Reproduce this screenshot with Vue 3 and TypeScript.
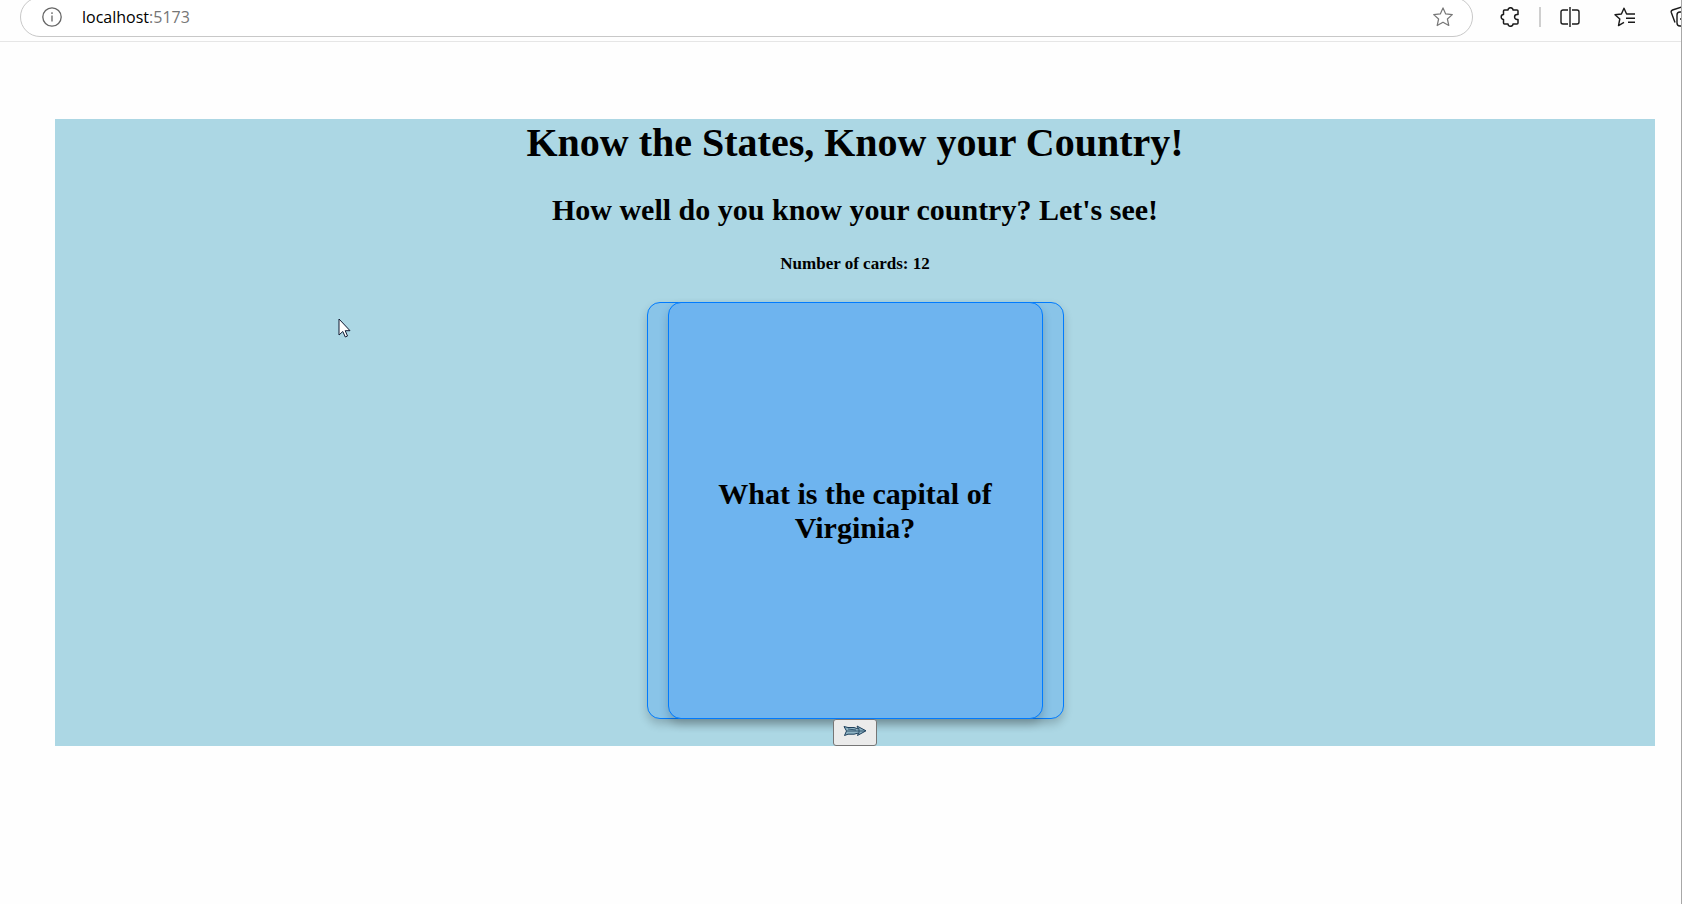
<script setup lang="ts">
import { ref } from 'vue'

interface Card {
  question: string
  answer: string
}

const cards: Card[] = [
  { question: 'What is the capital of Virginia?', answer: 'Richmond' },
]
const cardCount = 12
const current = ref(0)
const flipped = ref(false)

function nextCard(): void {
  flipped.value = false
  current.value = (current.value + 1) % cards.length
}
</script>

<template>
  <div class="window">
    <header class="toolbar">
      <div class="address">
        <button class="tool" type="button" aria-label="Site information">
          <svg width="20" height="20" viewBox="0 0 20 20" fill="none" stroke="#666" stroke-width="1.3">
            <circle cx="10" cy="10" r="9.2" />
            <path d="M10 8.5v6M10 5.2v1.7" />
          </svg>
        </button>
        <span class="url">localhost<span class="port">:5173</span></span>
        <button class="tool" type="button" aria-label="Add to favorites">
          <svg width="20" height="20" viewBox="0 0 20 20" fill="none" stroke="#777" stroke-width="1.2" stroke-linejoin="round">
            <path d="M10 .9l2.700 6 6.600.7-4.900 4.400 1.400 6.500-5.800-3.300-5.800 3.300L5.600 12 .7 7.600l6.600-.7z" />
          </svg>
        </button>
      </div>
      <button class="tool puzzle" type="button" aria-label="Extensions">
        <svg width="20" height="20" viewBox="0 0 20 20" fill="none" stroke="#1a1a1a" stroke-width="1.5" stroke-linejoin="round">
          <path d="M4.500 3H8a2.500 2.300 0 0 1 5 0H17a1 1 0 0 1 1 1V7.600h-1a2.400 2.400 0 0 0 0 4.800h1V16a1 1 0 0 1-1 1H13a2.500 2.300 0 0 1-5 0H4.500a1 1 0 0 1-1-1V12.400a2.300 2.400 0 0 1 0-4.800V4a1 1 0 0 1 1-1z" />
        </svg>
      </button>
      <span class="rule"></span>
      <button class="tool" type="button" aria-label="Split screen">
        <svg width="20" height="20" viewBox="0 0 20 20" fill="none" stroke="#1a1a1a" stroke-width="1.4">
          <path d="M8 3H3a2 2 0 0 0-2 2v10a2 2 0 0 0 2 2h5M12 3h5a2 2 0 0 1 2 2v10a2 2 0 0 1-2 2h-5M10 0v20" />
        </svg>
      </button>
      <button class="tool list" type="button" aria-label="Favorites">
        <svg width="22" height="20" viewBox="0 0 22 20" fill="none" stroke="#1a1a1a" stroke-width="1.4" stroke-linejoin="round">
          <path d="M16 7h-3.400L10 1.200 7.400 7 1 7.700l4.800 4.300-1.300 6.600L10 15.300M14 7h7M12 11.200h9M14 15.200h7" />
        </svg>
      </button>
      <button class="tool collections" type="button" aria-label="Collections">
        <svg width="22" height="22" viewBox="0 0 22 22" fill="none" stroke="#1a1a1a" stroke-width="1.4">
          <path d="M5 16.500L1.300 6.500a2 2 0 0 1 1.200-2.500L12 1" />
          <rect x="7" y="6" width="14" height="14" rx="3" />
          <path d="M10 13h8M14 9v8" />
        </svg>
      </button>
    </header>

    <main class="page">
      <section class="quiz">
        <h1>Know the States, Know your Country!</h1>
        <h2>How well do you know your country? Let's see!</h2>
        <h5>Number of cards: {{ cardCount }}</h5>
        <div class="deck">
          <button class="card" type="button" @click="flipped = !flipped">
            {{ flipped ? cards[current].answer : cards[current].question }}
          </button>
        </div>
        <button class="next" type="button" aria-label="Next card" @click="nextCard">
          <svg width="24" height="12" viewBox="0 0 24 12" fill="#8fb3c4" stroke="#1d405c" stroke-width="1" stroke-linejoin="round">
            <path d="M1 1.500l4 1h6l4.500 1.500L14 1l9 4.800-8.500 4.700L15.500 8 11 9.200H5L1.500 10.500 3.500 6z" />
            <path d="M4 6h18M16 3.500v5M5 4l8 1" stroke-width="0.8" />
          </svg>
        </button>
      </section>
    </main>

    <svg class="pointer" width="14" height="22" viewBox="0 0 14 22" fill="#fff" stroke="#101830" stroke-width="1" aria-hidden="true">
      <path d="M1 1v16l3.800-3.500L7.300 19l2.200-1-2.300-5.300H12z" />
    </svg>
  </div>
</template>

<style>
body {
  margin: 0;
  background: #fefefe;
}
</style>

<style scoped>
.window {
  position: relative;
  box-sizing: border-box;
  min-height: 100vh;
  border-right: 1px solid #a8a8a8;
  overflow: hidden;
  background: #fefefe;
  color: #000;
  font-family: "Liberation Serif", "Times New Roman", serif;
}

button {
  margin: 0;
  font-family: inherit;
  color: inherit;
  cursor: pointer;
}

.toolbar {
  box-sizing: border-box;
  display: flex;
  align-items: center;
  height: 42px;
  padding: 0 0 8px 20px;
  border-bottom: 1px solid #e6e6e6;
  overflow: hidden;
}

.address {
  box-sizing: border-box;
  flex: 1;
  display: flex;
  align-items: center;
  height: 40px;
  padding: 0 19px 0 21px;
  border: 1px solid #c8c8c8;
  border-radius: 20px;
  background: #fff;
}

.tool {
  flex: none;
  display: flex;
  padding: 0;
  border: 0;
  background: none;
}

.tool svg {
  display: block;
  flex: none;
}

.url {
  flex: 1;
  margin-left: 20px;
  font-family: "Open Sans", "Noto Sans", sans-serif;
  font-size: 16px;
  line-height: 24px;
}

.port {
  color: #767676;
}

.puzzle {
  margin-left: 27px;
}

.rule {
  flex: none;
  width: 2px;
  height: 20px;
  margin: 0 19px;
  background: #cfcfcf;
}

.list {
  margin-left: 34px;
}

.collections {
  width: 11px;
  margin-left: 34px;
  overflow: hidden;
}

.page {
  padding: 77px 26px 0 55px;
}

.quiz {
  display: flex;
  flex-direction: column;
  align-items: center;
  background: #acd7e4;
  text-align: center;
}

h1,
h2,
h5 {
  margin: 0;
  font-weight: bold;
}

h1 {
  font-size: 40px;
  line-height: 48px;
}

h2 {
  margin-top: 26px;
  font-size: 30px;
  line-height: 34px;
}

h5 {
  margin-top: 27px;
  font-size: 17px;
  line-height: 20px;
}

.deck {
  box-sizing: border-box;
  width: 417px;
  height: 417px;
  display: flex;
  justify-content: center;
  margin-top: 28px;
  border: 1px solid #007bff;
  border-radius: 13px;
  background: #89c4e8;
  box-shadow: 0 5px 10px rgba(0, 0, 0, 0.2);
}

.card {
  box-sizing: border-box;
  width: 375px;
  margin: -1px 0;
  padding: 0 25px;
  border: 1px solid #007bff;
  border-radius: 13px;
  background: #6eb4ef;
  box-shadow: 0 5px 10px rgba(0, 0, 0, 0.2);
  font-size: 30px;
  font-weight: bold;
  line-height: 34px;
}

.next {
  position: relative;
  box-sizing: border-box;
  width: 44px;
  height: 27px;
  display: flex;
  justify-content: center;
  padding: 5px 0 0;
  border: 1px solid #767676;
  border-radius: 3px;
  background: #ebebeb;
}

.pointer {
  position: absolute;
  left: 338px;
  top: 318px;
}
</style>
